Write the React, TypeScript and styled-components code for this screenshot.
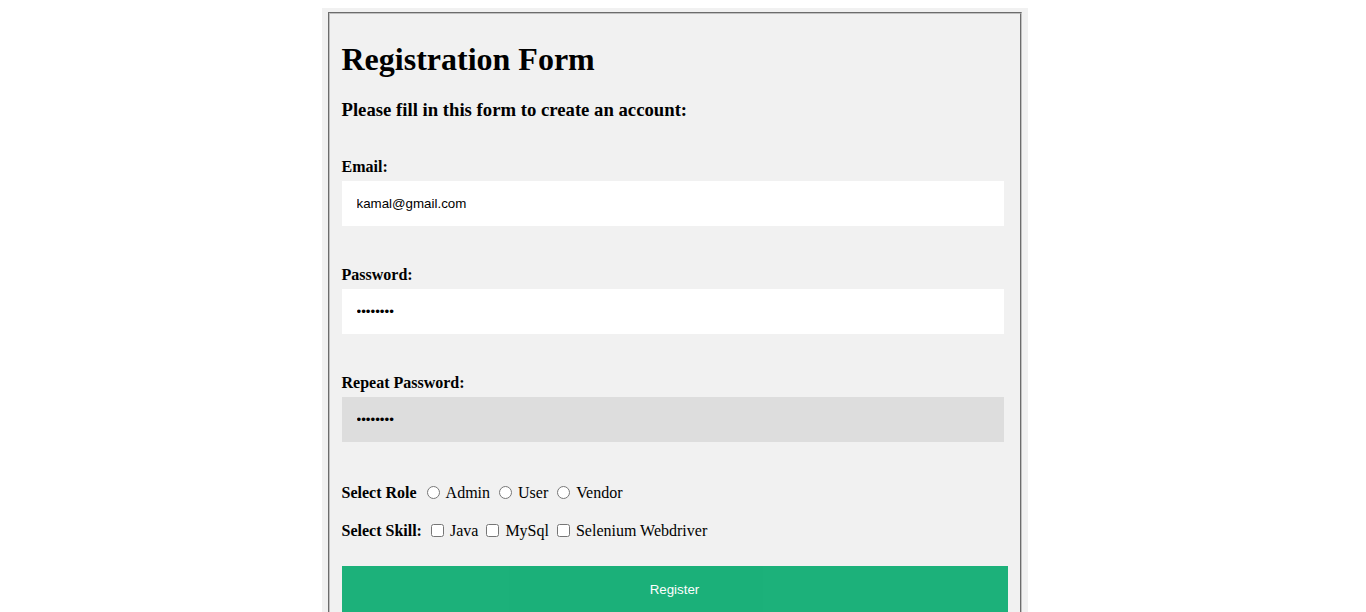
import styled, { createGlobalStyle } from "styled-components";

const GlobalStyle = createGlobalStyle`
  body {
    margin: 8px 25px 8px 8px;
    background: #fff;
    font-family: "Liberation Serif", "Times New Roman", serif;
    color: #000;
  }
`;

export default function App() {
  const roles = ["Admin", "User", "Vendor"];
  const skills = ["Java", "MySql", "Selenium Webdriver"];
  return (
    <>
      <GlobalStyle />
      <Container>
        <FieldSet>
          <Title>Registration Form</Title>
          <SubTitle>Please fill in this form to create an account:</SubTitle>

          {/* text fields */}
          <Field>
            <Label htmlFor="email">Email:</Label>
            <Input id="email" type="text" defaultValue="kamal@gmail.com" />
          </Field>
          <Field>
            <Label htmlFor="psw">Password:</Label>
            <Input id="psw" type="password" defaultValue="12345678" />
          </Field>
          <Field>
            <Label htmlFor="psw-repeat">Repeat Password:</Label>
            <Input
              id="psw-repeat"
              type="password"
              defaultValue="12345678"
              $active
            />
          </Field>

          {/* choices */}
          <ChoiceRow $first>
            <ChoiceTitle>Select Role</ChoiceTitle>
            {roles.map((r) => (
              <Choice key={r}>
                <Radio type="radio" name="role" />
                {r}
              </Choice>
            ))}
          </ChoiceRow>
          <ChoiceRow>
            <ChoiceTitle>Select Skill:</ChoiceTitle>
            {skills.map((s) => (
              <Choice key={s}>
                <Check type="checkbox" />
                {s}
              </Choice>
            ))}
          </ChoiceRow>

          <RegisterButton type="submit">Register</RegisterButton>
        </FieldSet>
      </Container>
    </>
  );
}

interface inputProps {
  $active?: boolean;
}

interface rowProps {
  $first?: boolean;
}

const Container = styled.div`
  width: 706px;
  margin: 0 auto;
  padding: 4px;
  box-sizing: border-box;
  background-color: #f1f1f1;
`;

const FieldSet = styled.div`
  margin: 0 2px;
  border: 2px groove rgb(192, 192, 192);
  padding: 6px 12px 10px;
`;

const Title = styled.h1`
  font-size: 32px;
  font-weight: bold;
  margin: 21px 0 21px;
  line-height: 37px;
`;

const SubTitle = styled.h3`
  font-size: 18.72px;
  font-weight: bold;
  margin: 0;
  line-height: 22px;
`;

const Field = styled.div`
  display: flex;
  flex-direction: column;
  margin-top: 37px;
  & + & {
    margin-top: 40px;
  }
`;

const Label = styled.label`
  font-size: 16px;
  font-weight: bold;
  line-height: 18px;
`;

const Input = styled.input<inputProps>`
  width: 662px;
  box-sizing: border-box;
  height: 45px;
  margin-top: 5px;
  padding: 15px;
  border: none;
  outline: none;
  font-family: "Liberation Sans", Arial, sans-serif;
  font-size: 13.33px;
  color: #000;
  background-color: ${(p) => (p.$active ? "#ddd" : "#fff")};
`;

const ChoiceRow = styled.div<rowProps>`
  display: flex;
  align-items: center;
  font-size: 16px;
  line-height: 18px;
  margin-top: ${(p) => (p.$first ? "42px" : "20px")};
`;

const ChoiceTitle = styled.b`
  margin-right: 1px;
`;

const Choice = styled.label`
  display: inline-flex;
  align-items: center;
  margin-left: 3px;
`;

const Radio = styled.input`
  width: 13px;
  height: 13px;
  margin: 0 6px 2px 6px;
`;

const Check = styled.input`
  width: 13px;
  height: 13px;
  margin: 0 6px 2px 5px;
`;

const RegisterButton = styled.button`
  display: block;
  width: 100%;
  margin-top: 26px;
  padding: 16px 20px;
  border: none;
  cursor: pointer;
  background-color: #04aa6d;
  opacity: 0.9;
  color: #fff;
  font-family: "Liberation Sans", Arial, sans-serif;
  font-size: 13.33px;
  line-height: 15px;
  :hover {
    opacity: 1;
  }
`;
